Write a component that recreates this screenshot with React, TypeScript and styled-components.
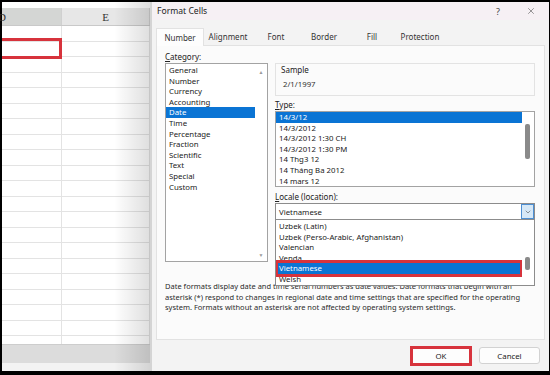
import styled, { createGlobalStyle, css } from "styled-components";
import { X, ChevronDown } from "lucide-react";

const GlobalStyle = createGlobalStyle`
  html, body {
    margin: 0;
    padding: 0;
    background: #000;
  }
  body {
    font-family: "Noto Sans", "Open Sans", sans-serif;
  }
  * {
    box-sizing: border-box;
  }
`;

const Frame = styled.div`
  width: 550px;
  height: 375px;
  display: flex;
  background: #000;
  padding: 2px 1px 4px 2px;
  overflow: hidden;
`;

// SPREADSHEET BEHIND THE DIALOG
const Sheet = styled.div`
  position: relative;
  flex: none;
  width: 148px;
  display: flex;
  flex-direction: column;
  background: #fff;
  padding-top: 6px;

  &::after {
    content: "";
    position: absolute;
    top: 0;
    right: 0;
    bottom: 0;
    width: 36px;
    background: linear-gradient(to right, rgba(0, 0, 0, 0), rgba(0, 0, 0, 0.13));
    pointer-events: none;
  }
`;

const HeaderRow = styled.div`
  display: flex;
  height: 18px;
  border-bottom: 1px solid #c9c9c9;
`;

const HeadCell = styled.div<{ $w?: number; $active?: boolean }>`
  width: ${(p) => (p.$w ? `${p.$w}px` : "auto")};
  flex: ${(p) => (p.$w ? "none" : 1)};
  display: flex;
  align-items: center;
  justify-content: ${(p) => (p.$active ? "flex-start" : "center")};
  background: ${(p) => (p.$active ? "#d4d6d4" : "#e7e7e7")};
  border-right: 1px solid #d0d0d0;
  font-family: "Liberation Serif", serif;
  font-size: 11px;
  color: #333;

  span {
    margin-left: ${(p) => (p.$active ? "-4px" : "0")};
  }
`;

const Grid = styled.div`
  flex: 1;
  overflow: hidden;
`;

const Row = styled.div`
  display: flex;
  height: 15.5px;
  border-bottom: 1px solid #e3e3e3;
`;

const Cell = styled.div<{ $w?: number; $marked?: boolean }>`
  position: relative;
  width: ${(p) => (p.$w ? `${p.$w}px` : "auto")};
  flex: ${(p) => (p.$w ? "none" : 1)};
  border-right: 1px solid #e3e3e3;

  ${(p) =>
    p.$marked &&
    css`
      &::after {
        content: "";
        position: absolute;
        left: -4px;
        right: -1px;
        top: -4px;
        bottom: -3px;
        border: 3px solid #d7333c;
        z-index: 1;
      }
    `}
`;

const SheetFooter = styled.div`
  height: 27px;
  border-top: 1px solid #cdcdcd;
  background: linear-gradient(#dcdcdc 0 18px, #f3f3f3 18px);
`;

// DIALOG
const Dialog = styled.div`
  flex: 1;
  min-width: 0;
  display: flex;
  flex-direction: column;
  background: #f3f3f3;
  border-left: 2px solid #d4d4d4;
`;

const TitleBar = styled.div`
  height: 18px;
  display: flex;
  align-items: center;
  padding: 0 13px 0 5px;
  background: #f6f0f4;
  font-size: 8.6px;
  color: #222;
`;

const Title = styled.div`
  flex: 1;
`;

const TitleButtons = styled.div`
  display: flex;
  align-items: center;
  gap: 26px;
  color: #444;
  font-size: 9px;
`;

const TabStrip = styled.div`
  height: 25px;
  display: flex;
  align-items: flex-end;
  padding-left: 4px;
`;

const Tab = styled.div<{ $active?: boolean }>`
  width: 48px;
  height: 18px;
  display: flex;
  align-items: center;
  justify-content: center;
  font-size: 8px;
  color: #333;
  ${(p) =>
    p.$active &&
    css`
      background: #fdfdfd;
      border: 1px solid #e2e2e2;
      border-bottom: none;
      margin-bottom: -1px;
      position: relative;
      z-index: 1;
    `}
`;

const Panel = styled.div`
  flex: 1;
  min-width: 0;
  margin: 0 4px;
  background: #fbfbfb;
  border: 1px solid #e2e2e2;
  padding: 5px 9px 0 8px;
  display: flex;
  flex-direction: column;
`;

const Columns = styled.div`
  display: flex;
  gap: 7px;
`;

const LeftCol = styled.div`
  width: 103px;
  display: flex;
  flex-direction: column;
`;

const RightCol = styled.div`
  width: 260px;
  display: flex;
  flex-direction: column;
  padding-top: 12px;
`;

const FieldLabel = styled.div<{ $top?: number }>`
  height: 11px;
  line-height: 11px;
  font-size: 8px;
  color: #222;
  margin-top: ${(p) => p.$top ?? 0}px;
  margin-bottom: 1px;
`;

const ListBox = styled.div<{ $h: number }>`
  height: ${(p) => p.$h}px;
  display: flex;
  background: #fff;
  border: 1px solid #a3a3a3;
`;

const Items = styled.div<{ $pad?: number }>`
  flex: 1;
  padding-top: ${(p) => p.$pad ?? 1}px;
  overflow: hidden;
`;

const Item = styled.div<{ $selected?: boolean; $marked?: boolean }>`
  height: 10.6px;
  line-height: 10.6px;
  font-size: 7.8px;
  padding-left: 3px;
  color: #222;
  white-space: nowrap;
  ${(p) =>
    p.$selected &&
    css`
      background: #0a74d4;
      color: #fff;
    `}
  ${(p) =>
    p.$marked &&
    css`
      margin: 0 2px;
      padding-left: 1px;
      box-shadow: 0 0 0 3px #d7333c;
      position: relative;
    `}
`;

const ScrollTrack = styled.div`
  position: relative;
  width: 12px;
  display: flex;
  flex-direction: column;
  justify-content: space-between;
  align-items: center;
  padding: 5px 0 3px;
  font-size: 5px;
  color: #9a9a9a;
`;

const Thumb = styled.div<{ $top: number; $h: number }>`
  position: absolute;
  left: 3px;
  top: ${(p) => p.$top}px;
  width: 5px;
  height: ${(p) => p.$h}px;
  border-radius: 2px;
  background: #8a8a8a;
`;

const SampleBox = styled.div`
  height: 33px;
  border: 1px solid #e3e3e3;
  padding: 0 5px;
  font-size: 7.8px;
  color: #333;
`;

const SampleValue = styled.div`
  margin-top: 4px;
  padding-left: 2px;
  line-height: 11px;
`;

const ComboWrap = styled.div`
  position: relative;
`;

const Combo = styled.div`
  height: 17px;
  display: flex;
  align-items: center;
  background: #fff;
  border: 1px solid #8c8c8c;
  font-size: 7.8px;
  color: #222;
  padding-left: 3px;
`;

const ComboText = styled.div`
  flex: 1;
`;

const ComboButton = styled.div`
  width: 13px;
  height: 100%;
  display: flex;
  align-items: center;
  justify-content: center;
  background: #d6e8f7;
  border: 1px solid #4d8fd3;
  color: #333;
`;

const Popup = styled.div`
  position: absolute;
  top: 100%;
  left: 0;
  right: 0;
  height: 66px;
  display: flex;
  background: #fff;
  border: 1px solid #8c8c8c;
  border-top: none;
  z-index: 2;
`;

const PopupItems = styled.div`
  flex: 1;
  padding-top: 1px;
  overflow: hidden;
`;

const Description = styled.div`
  margin-top: 19px;
  font-size: 7.5px;
  line-height: 10.5px;
  color: #2a2a2a;
  white-space: nowrap;
  overflow: hidden;
`;

const ButtonBar = styled.div`
  height: 31px;
  display: flex;
  align-items: center;
  justify-content: flex-end;
  gap: 7px;
  padding: 0 9px 0 0;
`;

const Button = styled.div<{ $marked?: boolean }>`
  width: ${(p) => (p.$marked ? 62 : 61)}px;
  height: ${(p) => (p.$marked ? 20 : 17)}px;
  display: flex;
  align-items: center;
  justify-content: center;
  background: #fdfdfd;
  font-size: 7.8px;
  color: #222;
  border: ${(p) => (p.$marked ? "3px solid #d7333c" : "1px solid #d2d2d2")};
  border-radius: ${(p) => (p.$marked ? 0 : 3)}px;
`;

const categories = [
  "General",
  "Number",
  "Currency",
  "Accounting",
  "Date",
  "Time",
  "Percentage",
  "Fraction",
  "Scientific",
  "Text",
  "Special",
  "Custom",
];

const types = [
  "14/3/12",
  "14/3/2012",
  "14/3/2012 1:30 CH",
  "14/3/2012 1:30 PM",
  "14 Thg3 12",
  "14 Tháng Ba 2012",
  "14 mars 12",
];

const locales = [
  "Uzbek (Latin)",
  "Uzbek (Perso-Arabic, Afghanistan)",
  "Valencian",
  "Venda",
  "Vietnamese",
  "Welsh",
];

const tabs = ["Number", "Alignment", "Font", "Border", "Fill", "Protection"];

const App = () => {
  return (
    <Frame>
      <GlobalStyle />
      <Sheet>
        <HeaderRow>
          <HeadCell $w={60} $active>
            <span>D</span>
          </HeadCell>
          <HeadCell>
            <span>E</span>
          </HeadCell>
        </HeaderRow>
        <Grid>
          {Array.from({ length: 21 }).map((_, i) => (
            <Row key={i}>
              <Cell $w={60} $marked={i === 1} />
              <Cell />
            </Row>
          ))}
        </Grid>
        <SheetFooter />
      </Sheet>

      <Dialog>
        <TitleBar>
          <Title>Format Cells</Title>
          <TitleButtons>
            <span>?</span>
            <X size={10} strokeWidth={1.3} />
          </TitleButtons>
        </TitleBar>

        <TabStrip>
          {tabs.map((t) => (
            <Tab key={t} $active={t === "Number"}>
              {t}
            </Tab>
          ))}
        </TabStrip>

        <Panel>
          <Columns>
            <LeftCol>
              <FieldLabel>
                <u>C</u>ategory:
              </FieldLabel>
              <ListBox $h={199}>
                <Items>
                  {categories.map((c) => (
                    <Item key={c} $selected={c === "Date"}>
                      {c}
                    </Item>
                  ))}
                </Items>
                <ScrollTrack>
                  <span>▲</span>
                  <span>▼</span>
                </ScrollTrack>
              </ListBox>
            </LeftCol>

            <RightCol>
              <SampleBox>
                <FieldLabel>Sample</FieldLabel>
                <SampleValue>2/1/1997</SampleValue>
              </SampleBox>

              <FieldLabel $top={3}>
                <u>T</u>ype:
              </FieldLabel>
              <ListBox $h={76}>
                <Items $pad={0}>
                  {types.map((t, i) => (
                    <Item key={t} $selected={i === 0}>
                      {t}
                    </Item>
                  ))}
                </Items>
                <ScrollTrack>
                  <Thumb $top={12} $h={35} />
                </ScrollTrack>
              </ListBox>

              <FieldLabel $top={4}>
                <u>L</u>ocale (location):
              </FieldLabel>
              <ComboWrap>
                <Combo>
                  <ComboText>Vietnamese</ComboText>
                  <ComboButton>
                    <ChevronDown size={8} strokeWidth={1.5} />
                  </ComboButton>
                </Combo>
                <Popup>
                  <PopupItems>
                    {locales.map((l) => (
                      <Item key={l} $selected={l === "Vietnamese"} $marked={l === "Vietnamese"}>
                        {l}
                      </Item>
                    ))}
                  </PopupItems>
                  <ScrollTrack>
                    <Thumb $top={37} $h={13} />
                  </ScrollTrack>
                </Popup>
              </ComboWrap>
            </RightCol>
          </Columns>

          <Description>
            Date formats display date and time serial numbers as date values. Date formats that begin with an
            <br />
            asterisk (*) respond to changes in regional date and time settings that are specified for the operating
            <br />
            system. Formats without an asterisk are not affected by operating system settings.
          </Description>
        </Panel>

        <ButtonBar>
          <Button $marked>OK</Button>
          <Button>Cancel</Button>
        </ButtonBar>
      </Dialog>
    </Frame>
  );
};

export default App;
